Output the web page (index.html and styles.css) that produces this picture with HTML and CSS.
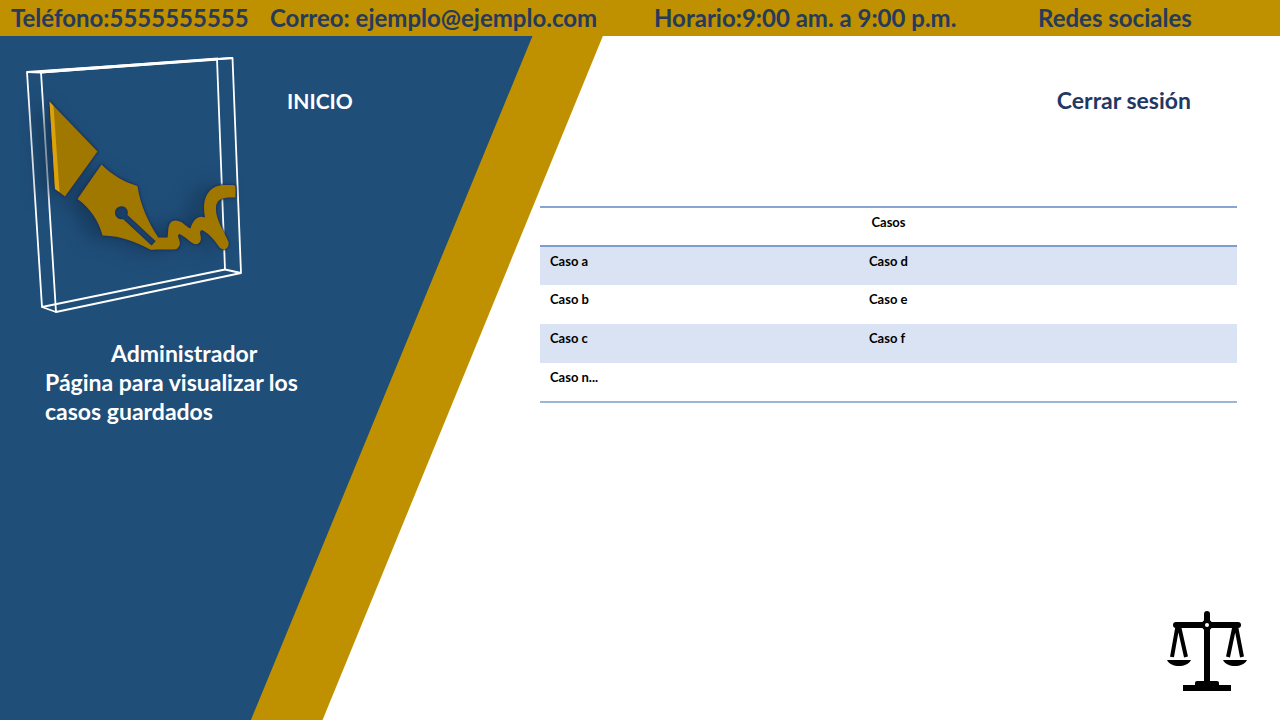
FILE: index.html
```html
<!DOCTYPE html>
<html lang="es">
<head>
<meta charset="utf-8">
<meta name="viewport" content="width=device-width, initial-scale=1">
<title>Administrador - Casos guardados</title>
<link rel="stylesheet" href="styles.css">
</head>
<body>
<header class="topbar">
  <span>Teléfono:5555555555</span>
  <span>Correo: ejemplo@ejemplo.com</span>
  <span>Horario:9:00 am. a 9:00 p.m.</span>
  <a href="#redes">Redes sociales</a>
</header>
<div class="page">
  <aside class="side">
    <div class="brand">
      <svg class="logo" viewBox="20 50 230 270" role="img" aria-label="Pluma y firma">
        <g fill="none" stroke="#fff" stroke-width="1.8" stroke-linejoin="round">
          <path d="M27 72 217 59 225 269.500 42 307Z"/>
          <path d="M41 72.500 232.500 58 241 273 56 312Z"/>
          <path d="M27 72 41 72.500M217 59 232.500 58M225 269.500 241 273M42 307 56 312"/>
          <path stroke-width="3" d="M40 72 218 59"/>
        </g>
        <g class="pen">
          <path fill="#a07800" d="M49.500 101.500 97.500 151.500 65 196.500 55 189Z"/>
          <path fill="#dca20a" d="M49.500 101.500 53.500 106 59.500 192 55 189Z"/>
          <path fill="#a07800" fill-rule="evenodd" d="M101.500 164.500C112 175 124 182 137.500 186C140 204 148 222 158 237L155.500 241 127.500 215A6.500 6.500 0 1 0 123 219L151.500 245.500 155 242V249.500H150C136 242 122 236 102.500 235.500C99 221 90 208 77.500 199Z"/>
          <path fill="#a07800" d="M157 237.500H167.500C169 234 166 220 176 220.500C183 221 186 227 190.500 228.500C193 219 199 215 205 217.500C201 197 210 185 224 185H233Q235.500 185 235.500 187.500V197.500C222 197 217 199 216 207C215 219 224 231 228.500 242C230 249 222 252 218.500 246C213 238 208 233 202 230C197 232 204 238 199 243C194 248 187 237 179.500 234C175 236 183 242 178.500 247Q177 249.500 174 249.500H150L155 242Z"/>
        </g>
      </svg>
      <a class="home" href="#inicio">INICIO</a>
    </div>
    <h1 class="role">Administrador</h1>
    <p class="about">Página para visualizar los casos guardados</p>
  </aside>
  <main class="content">
    <a class="logout" href="#salir">Cerrar sesión</a>
    <table class="cases">
      <colgroup><col class="col-first"><col></colgroup>
      <thead>
        <tr><th colspan="2">Casos</th></tr>
      </thead>
      <tbody>
        <tr><td>Caso a</td><td>Caso d</td></tr>
        <tr><td>Caso b</td><td>Caso e</td></tr>
        <tr><td>Caso c</td><td>Caso f</td></tr>
        <tr><td>Caso n...</td><td></td></tr>
      </tbody>
    </table>
    <svg class="scales" viewBox="1165 610 84 82" role="img" aria-label="Balanza de la justicia">
      <path d="M1204 684V614a3 3 0 0 1 6 0V684Z"/>
      <rect x="1173" y="622" width="68" height="6" rx="3"/>
      <circle cx="1207" cy="625" r="5.500"/>
      <circle cx="1207" cy="625" r="2" fill="#fff"/>
      <path fill="none" stroke="#000" stroke-width="4" d="M1177.500 626 1172 657M1179 626 1186 657M1234.500 626 1228 657M1236 626 1242 657"/>
      <path d="M1167 660H1191C1189 664 1184 666 1179 666S1169 664 1167 660ZM1223 660H1247C1245 664 1240 666 1235 666S1225 664 1223 660Z"/>
      <path d="M1183 685H1195V683a2 2 0 0 1 2-2H1217a2 2 0 0 1 2 2V685H1231V691H1183Z"/>
    </svg>
  </main>
</div>
</body>
</html>
```
FILE: styles.css
```css
* { box-sizing: border-box; }

body {
  margin: 0;
  min-height: 100vh;
  display: flex;
  flex-direction: column;
  background: #fff;
  font-family: Lato, "Open Sans", sans-serif;
  font-weight: 700;
}

a { color: inherit; text-decoration: none; }

.topbar {
  display: grid;
  grid-template-columns: 259fr 384fr 384fr 242fr;
  align-items: center;
  min-height: 36px;
  padding-left: 11px;
  background: #bf9000;
  color: #263a5c;
  font-size: 24px;
  line-height: 36px;
  white-space: nowrap;
}

.page {
  flex: 1;
  display: grid;
  grid-template-columns: 540fr 740fr;
  position: relative;
  isolation: isolate;
}

.page::before,
.page::after {
  content: "";
  position: absolute;
  inset: 0;
  z-index: -1;
}

.page::before {
  background: #bf9000;
  clip-path: polygon(0 0, 47.1% 0, 25.2% 100%, 0 100%);
}

.page::after {
  background: #1f4e79;
  clip-path: polygon(0 0, 41.6% 0, 19.6% 100%, 0 100%);
}

.side { padding: 14px 20px; color: #fff; }

.brand { display: flex; gap: 37px; }

.logo { width: 230px; height: 270px; }

.pen {
  filter: drop-shadow(0 0 1px #1b2f5c) drop-shadow(0 0 1px #1b2f5c) drop-shadow(-14px 2px 9px #12304f99);
}

.home, .logout { line-height: 28px; }

.home { margin-top: 37px; font-size: 21px; }

.role, .about {
  margin: 0;
  font-size: 23px;
  font-weight: 700;
  line-height: 29px;
}

.role { margin-top: 19px; padding-left: 91px; }

.about { max-width: 300px; padding-left: 25px; }

.content {
  display: flex;
  flex-direction: column;
  align-items: flex-end;
  padding: 50px 43px 28px 0;
}

.logout { margin-right: 46px; color: #1f3864; font-size: 23px; }

.cases {
  width: 100%;
  margin-top: 92px;
  border-collapse: collapse;
  table-layout: fixed;
  border-top: 2px solid #86a5d3;
  border-bottom: 2px solid #9cb7d6;
  font-size: 13px;
  line-height: 16px;
}

.cases tr { height: 39px; }

.col-first { width: 319px; }

.cases th, .cases td { padding: 6px 10px; vertical-align: top; }

.cases thead { border-bottom: 2px solid #7d9dce; }

.cases td { text-align: left; }

.cases tbody tr:nth-child(odd) { background: #dae3f3; }

.scales { width: 84px; height: 82px; margin: auto -12px 0 0; }
```
